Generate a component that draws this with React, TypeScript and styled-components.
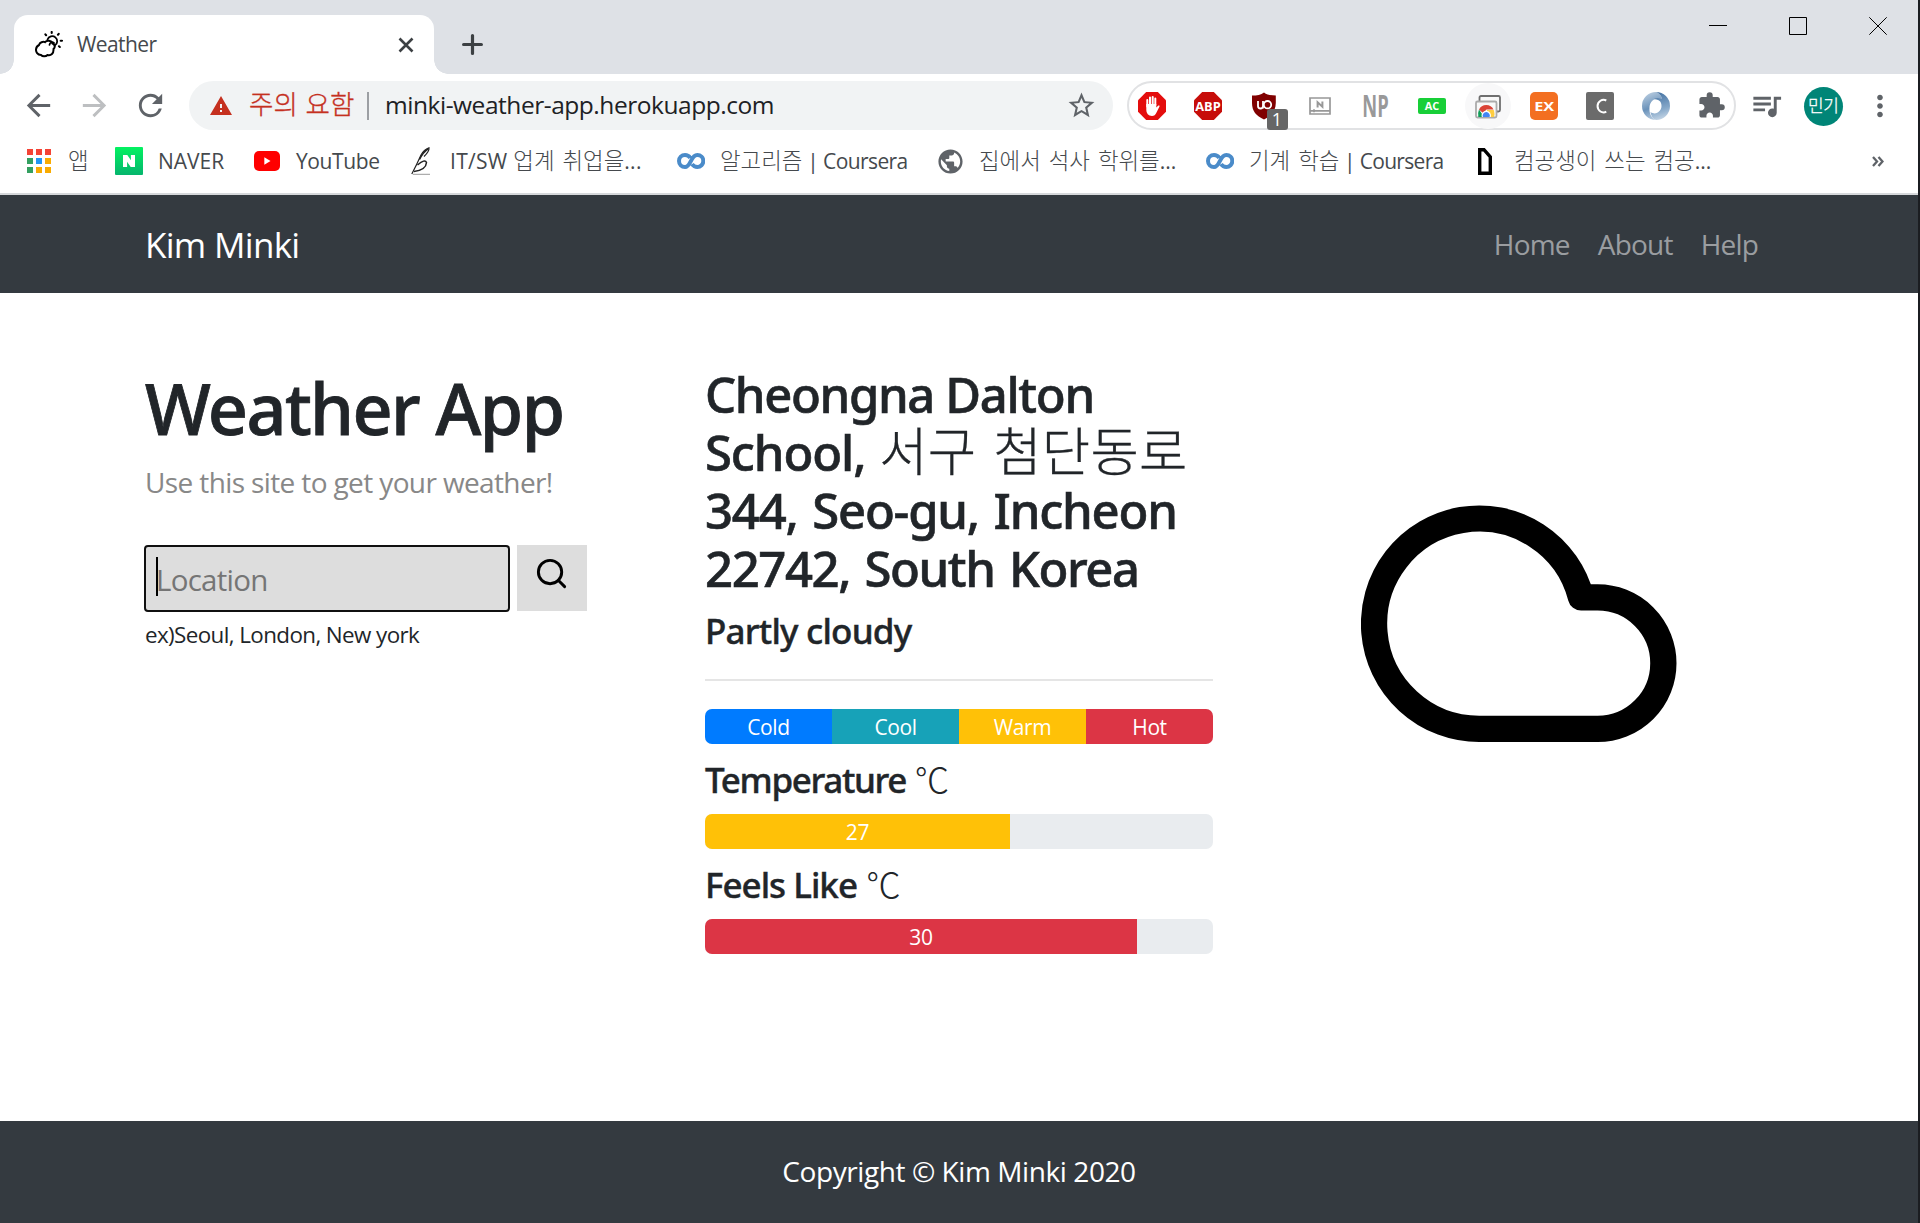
import React from "react";
import styled, { createGlobalStyle, css } from "styled-components";
import {
  MdArrowBack,
  MdArrowForward,
  MdExtension,
  MdMoreVert,
  MdPublic,
  MdQueueMusic,
  MdRefresh,
  MdStarBorder,
  MdWarning,
} from "react-icons/md";

const latin = '"Open Sans", "Noto Sans", "Noto Sans CJK KR", sans-serif';
const medium = '"Noto Sans", "Open Sans", "Noto Sans CJK KR", sans-serif';
const korean = '"Noto Sans CJK KR", sans-serif';

const GlobalStyle = createGlobalStyle`
  *, *::before, *::after { box-sizing: border-box; }
  body { margin: 0; background: #fff; }
  svg { display: block; flex: none; }
  h1, h2, h3, p { margin: 0; }
`;

/* ---------- window ---------- */

const Window = styled.div`
  display: flex;
  flex-direction: column;
  width: 1920px;
  height: 1223px;
  overflow: hidden;
  border-right: 2px solid #1b1d21;
  background: #fff;
  font-family: ${latin};
  color: #212529;
`;

const TabStrip = styled.div`
  display: flex;
  flex: none;
  height: 74px;
  padding: 15px 0 0 14px;
  background: #dee1e6;
`;

const Tab = styled.div`
  position: relative;
  display: flex;
  align-items: center;
  width: 420px;
  height: 59px;
  padding: 0 20px 0 21px;
  border-radius: 14px 14px 0 0;
  background: #fff;

  &::before,
  &::after {
    content: "";
    position: absolute;
    bottom: 0;
    width: 14px;
    height: 14px;
  }
  &::before {
    left: -14px;
    background: radial-gradient(circle at 0 0, transparent 13.5px, #fff 14px);
  }
  &::after {
    right: -14px;
    background: radial-gradient(circle at 100% 0, transparent 13.5px, #fff 14px);
  }
`;

const TabTitle = styled.span`
  flex: 1;
  margin: -1px 0 0 14px;
  font-size: 21px;
  letter-spacing: -0.6px;
  color: #45494d;
`;

const NewTab = styled.div`
  display: flex;
  align-items: center;
  height: 59px;
  margin-left: 28px;
`;

const WindowControls = styled.div`
  display: flex;
  gap: 62px;
  margin: 2px 31.5px 0 auto;
`;

/* ---------- toolbar ---------- */

const Toolbar = styled.div`
  display: flex;
  flex: none;
  align-items: center;
  height: 63px;
  padding: 0 21.5px 0 21px;
`;

const NavButtons = styled.div`
  display: flex;
  gap: 21px;
  color: #5f6368;
`;

const Omnibox = styled.div`
  display: flex;
  align-items: center;
  width: 924px;
  height: 49px;
  margin-left: 21px;
  padding: 0 16px 0 20px;
  border-radius: 25px;
  background: #f1f3f4;
`;

const Warning = styled.span`
  width: 104px;
  margin: -5px 14px 0 16px;
  font: 300 26.5px/40px ${korean};
  word-spacing: 2px;
  white-space: nowrap;
  color: #c5301f;
  -webkit-text-stroke: 0.35px #c5301f;
`;

const OmniDivider = styled.span`
  width: 2px;
  height: 28px;
  margin-right: 16px;
  background: #9c9fa3;
`;

const Address = styled.span`
  flex: 1;
  margin-top: -2px;
  font-size: 24.5px;
  letter-spacing: -0.46px;
  color: #202124;
`;

const Extensions = styled.div`
  display: flex;
  align-items: center;
  gap: 28px;
  height: 49px;
  margin-left: 14px;
  padding: 0 8.5px;
  border: 2px solid #e1e2e4;
  border-radius: 25px;
`;

const ExtensionSlot = styled.div<{ $halo?: boolean }>`
  position: relative;
  display: flex;
  align-items: center;
  justify-content: center;
  width: 28px;
  height: 28px;
  border-radius: 50%;
  color: #5f6368;
  ${(p) => p.$halo && css`
    background: #f8f8f9;
    box-shadow: 0 0 0 9px #f8f8f9;
  `}
`;

const Badge = styled.span`
  position: absolute;
  left: 17px;
  top: 17px;
  width: 21px;
  height: 21px;
  border-radius: 3px;
  background: #666;
  color: #fff;
  font-size: 18px;
  line-height: 20px;
  text-align: center;
`;

const ToolbarEnd = styled.div`
  display: flex;
  align-items: center;
  flex: 1;
  justify-content: space-between;
  margin-left: 13px;
  color: #5f6368;
`;

const Avatar = styled.div`
  width: 39px;
  height: 39px;
  margin-top: 1px;
  border-radius: 50%;
  background: #008577;
  color: #fff;
  font: 300 17px/36px ${korean};
  letter-spacing: -0.5px;
  text-align: center;
  -webkit-text-stroke: 0.3px #fff;
`;

/* ---------- bookmarks ---------- */

const Bookmarks = styled.div`
  display: flex;
  flex: none;
  align-items: center;
  height: 58px;
  padding: 0 34px 8px 25px;
  border-bottom: 2px solid #d6d8db;
`;

const Bookmark = styled.div<{ $width: number }>`
  display: flex;
  align-items: center;
  gap: 15px;
  width: ${(p) => p.$width}px;
`;

const BookmarkIcon = styled.span`
  display: flex;
  justify-content: center;
  width: 28px;
`;

const BookmarkLabel = styled.span<{ $tracking?: number }>`
  font-size: 21px;
  line-height: 30px;
  letter-spacing: ${(p) => p.$tracking ?? 0}px;
  white-space: pre;
  color: #45494d;
`;

const Hangul = styled.span`
  font: 300 22.4px/0 ${korean};
  letter-spacing: 0;
  word-spacing: 3px;
`;

const More = styled.div`
  margin-left: auto;
`;

/* ---------- site ---------- */

const Navbar = styled.header`
  display: flex;
  flex: none;
  align-items: center;
  justify-content: space-between;
  height: 98px;
  padding: 0 160px 0 145px;
  background: #343a40;
`;

const Brand = styled.a`
  font-size: 35px;
  letter-spacing: -0.7px;
  color: #fff;
`;

const NavLinks = styled.nav`
  display: flex;
  gap: 28px;
`;

const NavLink = styled.a`
  font-size: 28px;
  letter-spacing: -0.8px;
  color: #9a9da0;
`;

const Main = styled.main`
  display: grid;
  grid-template-columns: 560px 656px 1fr;
  flex: 1;
  padding: 71px 0 0 145px;
`;

const Column = styled.section``;

const Title = styled.h1`
  margin-top: 2px;
  font: 500 70px/84px ${medium};
  letter-spacing: -1.6px;
  -webkit-text-stroke: 0.8px #212529;
`;

const Lead = styled.p`
  margin-top: 11px;
  font-size: 28px;
  line-height: 42px;
  letter-spacing: -0.62px;
  color: #888;
`;

const SearchForm = styled.div`
  display: flex;
  gap: 7px;
  margin: 42px 0 0 -1px;
`;

const LocationField = styled.div`
  display: flex;
  align-items: center;
  width: 366px;
  height: 67px;
  padding: 2px 0 0 10px;
  border: 2px solid #101010;
  border-radius: 4px;
  background: #ddd;
`;

const Caret = styled.span`
  width: 2px;
  height: 39px;
  margin: -6px -2px 0 0;
  background: #000;
`;

const Placeholder = styled.span`
  font-size: 29.5px;
  letter-spacing: -0.75px;
  color: #757575;
`;

const SearchButton = styled.div`
  display: flex;
  justify-content: center;
  width: 70px;
  height: 66px;
  padding: 11px 2px 0 0;
  background: #ddd;
`;

const Hint = styled.p`
  margin-top: 6px;
  font-size: 22.4px;
  line-height: 34px;
  letter-spacing: -0.6px;
`;

const Place = styled.h2`
  margin-top: 1px;
  font: 500 49px/58px ${medium};
  white-space: nowrap;
  -webkit-text-stroke: 0.6px #212529;
`;

const PlaceLine = styled.span<{ $tracking: number; $word?: number }>`
  display: block;
  height: 58px;
  letter-spacing: ${(p) => p.$tracking}px;
  word-spacing: ${(p) => p.$word ?? 0}px;
`;

const PlaceHangul = styled.span`
  margin-left: 2px;
  font: 300 52.5px/0 ${korean};
  letter-spacing: 0.3px;
  word-spacing: 5px;
  -webkit-text-stroke: 0.3px #212529;
`;

const Condition = styled.h3<{ $tracking?: number }>`
  height: 42px;
  font: 500 35px/44px ${medium};
  letter-spacing: ${(p) => p.$tracking ?? -0.8}px;
  -webkit-text-stroke: 0.4px #212529;
`;

const Degree = styled.span`
  margin-left: 1px;
  font: 300 34.5px/0 ${korean};
  -webkit-text-stroke: 0;
`;

const Forecast = styled(Column)`
  width: 508px;

  ${Place} + ${Condition} {
    margin-top: 12px;
  }
`;

const Rule = styled.hr`
  height: 2px;
  margin: 28px 0;
  border: 0;
  background: #e5e5e5;
`;

const Progress = styled.div`
  display: flex;
  height: 35px;
  overflow: hidden;
  border-radius: 7px;
  background: #e9ecef;

  & + ${Condition} {
    margin-top: 14px;
  }
  ${Condition} + & {
    margin-top: 14px;
  }
`;

const Bar = styled.div<{ $share: number; $color: string }>`
  width: ${(p) => p.$share}%;
  background: ${(p) => p.$color};
  color: #fff;
  font-size: 21px;
  line-height: 37px;
  letter-spacing: -0.4px;
  text-align: center;
`;

const CloudPanel = styled(Column)`
  padding-top: 102px;
`;

const Footer = styled.footer`
  display: flex;
  flex: none;
  align-items: center;
  justify-content: center;
  height: 102px;
  padding-bottom: 3px;
  background: #343a40;
  color: #fff;
  font-size: 28px;
  letter-spacing: -0.42px;
`;

/* ---------- drawings ---------- */

const octagon = "M8.2 0H19.8L28 8.2V19.8L19.8 28H8.2L0 19.8V8.2Z";

const WeatherIcon = () => (
  <svg width="28" height="28" viewBox="0 0 28 28" fill="none" stroke="#000" strokeWidth="1.8" strokeLinecap="round">
    <path d="M6 24C2.5 24 .8 21 1 18.300C1.300 15.500 3 14.500 4 14C4.800 11.400 8 10.300 10 11.200C12 8.800 16.500 9.300 17.500 12.500C20.300 13.500 20.300 16.500 18.500 18C18.800 22.500 16 25 12.500 24C10.500 26 7.500 25.500 6 24Z" strokeWidth="2" />
    <path d="M12.500 8.500A5 5 0 1 1 19.800 14.500M14.500 13.800C14.800 11.500 17 10.500 19 12" />
    <path d="M16.700 1V2M10.400 3.400L11.100 4.200M23.700 2.900L23 3.700M25.700 9.700H27M24 15.300L24.800 16" strokeWidth="2.100" />
  </svg>
);

const AdBlockIcon = () => (
  <svg width="28" height="28" viewBox="0 0 28 28">
    <path d={octagon} fill="#e40d0d" />
    <path d="M9.300 14.500V8M12 12V5.500M14.700 12V5M17.300 13V6.500" stroke="#fff" strokeWidth="2" strokeLinecap="round" />
    <path d="M8.300 12H18.300V15.500L20.300 13.600Q22 13 21.500 14.500L18.500 20.500Q17 24 14 24Q8.300 23.500 8.300 18Z" fill="#fff" />
  </svg>
);

const AbpIcon = () => (
  <svg width="28" height="28" viewBox="0 0 28 28">
    <path d={octagon} fill="#c70d0a" />
    <text x="14" y="18.700" textAnchor="middle" fontFamily="Open Sans" fontWeight="700" fontSize="12.800" fill="#fff">ABP</text>
  </svg>
);

const UblockIcon = () => (
  <svg width="28" height="28" viewBox="0 0 28 28">
    <path d="M14 .5C17 3 21 3.500 25.800 3.500V11C25.800 19 21 24 14 27.500C6 24 2 19 2 11V3.500C7 3.500 11 3 14 .5Z" fill="#800000" />
    <path d="M8 9V14Q8 16.500 10.500 16.500Q13 16.500 13 14V9M13 16.500V13" fill="none" stroke="#fff" strokeWidth="1.800" />
    <circle cx="17.500" cy="12.700" r="3.700" fill="none" stroke="#fff" strokeWidth="1.800" />
  </svg>
);

const MonitorIcon = () => (
  <svg width="22" height="18" viewBox="0 0 22 18" fill="none" stroke="#989898" strokeWidth="1.700">
    <path d="M1 1H21V17H1ZM1 13.800H21M5 12.300V15.300" />
    <path d="M8.600 10.500V5.300L13.400 9.700V4.500" strokeWidth="2" />
  </svg>
);

const NpIcon = () => (
  <svg width="28" height="28" viewBox="0 0 28 28" overflow="visible">
    <text transform="translate(.3 25) scale(.6 1)" fontFamily="Open Sans" fontWeight="700" fontSize="30.500" fill="#999">NP</text>
  </svg>
);

const AcIcon = () => (
  <svg width="28" height="28" viewBox="0 0 28 28">
    <rect y="6" width="28" height="16" rx="2" fill="#18cf38" />
    <text x="14" y="17.800" textAnchor="middle" textLength="14.500" lengthAdjust="spacingAndGlyphs" fontFamily="Open Sans" fontWeight="700" fontSize="10.500" fill="#fff">AC</text>
  </svg>
);

const RemoteIcon = () => (
  <svg width="28" height="28" viewBox="0 0 28 28">
    <rect x="5.500" y="4" width="20.500" height="15.500" rx="1.500" fill="#f8f8f8" stroke="#6f6f6f" strokeWidth="1.800" />
    <rect x="2" y="9.500" width="20.500" height="16" rx="1.500" fill="#f8f8f8" stroke="#ababab" strokeWidth="1.800" />
    <path d="M5 17.500A8 8 0 0 1 19.500 17.500H12.500L9 21Z" fill="#db4437" />
    <path d="M5 17.500L10 25H4.300Q3.600 21 5 17.500Z" fill="#0f9d58" />
    <path d="M13 18H19.800Q21 21.500 20 25H14Z" fill="#ffcd40" />
    <path d="M7.800 25A4.700 4.700 0 1 1 16.700 25Z" fill="#fff" />
    <path d="M8.900 25A3.600 3.600 0 1 1 15.600 25Z" fill="#4285f4" />
  </svg>
);

const ExIcon = () => (
  <svg width="28" height="28" viewBox="0 0 28 28">
    <rect width="28" height="28" rx="5" fill="#f36f21" />
    <text x="14.200" y="18.700" textAnchor="middle" textLength="20" lengthAdjust="spacingAndGlyphs" fontFamily="Open Sans" fontWeight="700" fontSize="13" fill="#fff">EX</text>
  </svg>
);

const CIcon = () => (
  <svg width="28" height="28" viewBox="0 0 28 28">
    <rect width="28" height="28" rx="2" fill="#6b6b6b" />
    <path d="M20.300 8.500A6 6.300 0 1 0 20.300 19.700" fill="none" stroke="#fff" strokeWidth="2" />
  </svg>
);

const SwirlIcon = () => (
  <svg width="28" height="28" viewBox="0 0 28 28">
    <defs>
      <linearGradient id="swirlA" x1="0.300" y1="0" x2="0.600" y2="1">
        <stop offset="0" stopColor="#b9cde0" />
        <stop offset="0.550" stopColor="#6a92ba" />
        <stop offset="1" stopColor="#bdd0e3" />
      </linearGradient>
      <linearGradient id="swirlB" x1="0.500" y1="0" x2="0.700" y2="1">
        <stop offset="0" stopColor="#4674a4" />
        <stop offset="0.600" stopColor="#86a8c9" />
        <stop offset="1" stopColor="#cbdae9" />
      </linearGradient>
    </defs>
    <path d="M14 0A14 14 0 0 0 14 28C9.500 26 7 22 7.500 15S14 5 20 7C19 3 17 1 14 0Z" fill="url(#swirlA)" />
    <path d="M14 0A14 14 0 0 1 14 28C11 27 9 24 8.500 20C14 24 19.500 19 19.500 14S17 8 12 7C14 5.500 17 5.500 20 7C19 3 17 1 14 0Z" fill="url(#swirlB)" />
    <path d="M14 7.500C10 9 9.500 18.500 13.500 20.500C18 19 18.500 10 14 7.500Z" fill="#fff" />
  </svg>
);

const AppsIcon = () => {
  const colors = ["#f44336", "#f44336", "#f44336", "#34a060", "#2196f3", "#f9ab00", "#34a060", "#f9ab00", "#f9ab00"];
  return (
    <svg width="24" height="24" viewBox="0 0 24 24">
      {colors.map((c, i) => (
        <rect key={i} x={(i % 3) * 9} y={Math.floor(i / 3) * 9} width="6" height="6" fill={c} />
      ))}
    </svg>
  );
};

const NaverIcon = () => (
  <svg width="28" height="28" viewBox="0 0 28 28">
    <defs>
      <linearGradient id="naver" x1="0" y1="0" x2="0" y2="1">
        <stop offset="0" stopColor="#03f261" />
        <stop offset="1" stopColor="#05b56d" />
      </linearGradient>
    </defs>
    <rect width="28" height="28" rx="1" fill="url(#naver)" />
    <path d="M8 8H12.300L15.900 13.300V8H20V20H15.700L12.100 14.700V20H8Z" fill="#fff" />
  </svg>
);

const YoutubeIcon = () => (
  <svg width="26" height="20" viewBox="0 0 26 20">
    <rect width="26" height="20" rx="5" fill="#f00" />
    <path d="M10.300 6.300L16.500 10L10.300 13.700Z" fill="#fff" />
  </svg>
);

const QuillIcon = () => (
  <svg width="20" height="28" viewBox="0 0 20 28" fill="none" stroke="#222">
    <path d="M.8 27Q6 17 10 8Q13 2.500 18 .8Q18.500 4 13 9.500" strokeWidth="1.200" />
    <path d="M8.500 12.500Q12 5 17.500 1.500" strokeWidth="1.500" />
    <path d="M6.500 18Q14 11.500 15.500 15.500Q15 23 3 24.500" strokeWidth="1.500" />
    <path d="M2 27.300H19" stroke="#999" strokeWidth="1" />
  </svg>
);

const CourseraIcon = () => (
  <svg width="28" height="16" viewBox="0 0 28 16" fill="none" stroke="#4a8bc9" strokeWidth="4">
    <path d="M13.300 4.800C12 2.900 10.300 2 8 2A6 6 0 1 0 8 14C14 14 13.500 2 20.300 2A6 6 0 1 1 20.300 14C18 14 16.300 13 15 11.200" />
  </svg>
);

const DIcon = () => (
  <svg width="14" height="27" viewBox="0 0 14 27" fill="none" stroke="#000" strokeWidth="3.400">
    <path d="M1.700 1.700H6L12.300 9V25.300H1.700Z" />
  </svg>
);

const hangulRun = /([\uac00-\ud7a3]+(?: [\uac00-\ud7a3]+)*)/;

/** Sets the Hangul runs of a label in their own face. */
const Mixed = ({ text }: { text: string }) => (
  <>
    {text.split(hangulRun).map((part, i) => (i % 2 ? <Hangul key={i}>{part}</Hangul> : part))}
  </>
);

const bookmarks: { label: string; width: number; tracking?: number; icon: React.ReactNode }[] = [
  { label: "앱", width: 90, icon: <AppsIcon /> },
  { label: "NAVER", width: 138, icon: <NaverIcon /> },
  { label: "YouTube", width: 154, tracking: -0.4, icon: <YoutubeIcon /> },
  { label: "IT/SW 업계 취업을...", width: 270, tracking: 0.3, icon: <QuillIcon /> },
  { label: "알고리즘 | Coursera", width: 259, tracking: -0.6, icon: <CourseraIcon /> },
  { label: "집에서 석사 학위를...", width: 270, icon: <MdPublic size={29} color="#5f6368" /> },
  { label: "기계 학습 | Coursera", width: 265, tracking: -0.7, icon: <CourseraIcon /> },
  { label: "컴공생이 쓰는 컴공...", width: 280, icon: <DIcon /> },
];

const extensions: { icon: React.ReactNode; halo?: boolean; badge?: string }[] = [
  { icon: <AdBlockIcon /> },
  { icon: <AbpIcon /> },
  { icon: <UblockIcon />, badge: "1" },
  { icon: <MonitorIcon /> },
  { icon: <NpIcon /> },
  { icon: <AcIcon /> },
  { icon: <RemoteIcon />, halo: true },
  { icon: <ExIcon /> },
  { icon: <CIcon /> },
  { icon: <SwirlIcon /> },
  { icon: <MdExtension size={29} /> },
];

const scale = [
  { label: "Cold", color: "#007bff" },
  { label: "Cool", color: "#17a2b8" },
  { label: "Warm", color: "#ffc107" },
  { label: "Hot", color: "#dc3545" },
];

export default function App() {
  return (
    <Window>
      <GlobalStyle />
      <TabStrip>
        <Tab>
          <WeatherIcon />
          <TabTitle>Weather</TabTitle>
          <svg width="16" height="16" viewBox="0 0 16 16" stroke="#3c4043" strokeWidth="2.600">
            <path d="M1.500 1.500L14.500 14.500M14.500 1.500L1.500 14.500" />
          </svg>
        </Tab>
        <NewTab>
          <svg width="21" height="21" viewBox="0 0 21 21" stroke="#3c4043" strokeWidth="3.200" strokeLinecap="round">
            <path d="M10.500 1.600V19.400M1.600 10.500H19.400" />
          </svg>
        </NewTab>
        <WindowControls>
          <svg width="18" height="18" viewBox="0 0 18 18" stroke="#000"><path d="M0 8.500H18" /></svg>
          <svg width="18" height="18" viewBox="0 0 18 18" stroke="#000" fill="none"><path d="M.5 .5H17.500V17.500H.5Z" /></svg>
          <svg width="18" height="18" viewBox="0 0 18 18" stroke="#000"><path d="M.3 .3L17.700 17.700M17.700 .3L.3 17.700" /></svg>
        </WindowControls>
      </TabStrip>

      <Toolbar>
        <NavButtons>
          <MdArrowBack size={35} />
          <MdArrowForward size={35} color="#bdbfc1" />
          <MdRefresh size={35} />
        </NavButtons>
        <Omnibox>
          <MdWarning size={24} color="#c5301f" />
          <Warning>주의 요함</Warning>
          <OmniDivider />
          <Address>minki-weather-app.herokuapp.com</Address>
          <MdStarBorder size={31} color="#5f6368" />
        </Omnibox>
        <Extensions>
          {extensions.map((e, i) => (
            <ExtensionSlot key={i} $halo={e.halo}>
              {e.icon}
              {e.badge && <Badge>{e.badge}</Badge>}
            </ExtensionSlot>
          ))}
        </Extensions>
        <ToolbarEnd>
          <MdQueueMusic size={35} />
          <Avatar>민기</Avatar>
          <MdMoreVert size={34} />
        </ToolbarEnd>
      </Toolbar>

      <Bookmarks>
        {bookmarks.map((b) => (
          <Bookmark key={b.label} $width={b.width}>
            <BookmarkIcon>{b.icon}</BookmarkIcon>
            <BookmarkLabel $tracking={b.tracking}>
              <Mixed text={b.label} />
            </BookmarkLabel>
          </Bookmark>
        ))}
        <More>
          <svg width="12" height="11" viewBox="0 0 12 11" fill="none" stroke="#5f6368" strokeWidth="2.300">
            <path d="M1 1L5 5.500L1 10M6.500 1L10.500 5.500L6.500 10" />
          </svg>
        </More>
      </Bookmarks>

      <Navbar>
        <Brand>Kim Minki</Brand>
        <NavLinks>
          <NavLink>Home</NavLink>
          <NavLink>About</NavLink>
          <NavLink>Help</NavLink>
        </NavLinks>
      </Navbar>

      <Main>
        <Column>
          <Title>Weather App</Title>
          <Lead>Use this site to get your weather!</Lead>
          <SearchForm>
            <LocationField>
              <Caret />
              <Placeholder>Location</Placeholder>
            </LocationField>
            <SearchButton>
              <svg width="35" height="35" viewBox="0 0 24 24" fill="none" stroke="#000" strokeWidth="2" strokeLinecap="round">
                <circle cx="11" cy="11" r="8" />
                <path d="M21 21L16.650 16.650" />
              </svg>
            </SearchButton>
          </SearchForm>
          <Hint>ex)Seoul, London, New york</Hint>
        </Column>

        <Forecast>
          <Place>
            <PlaceLine $tracking={-1.35}>Cheongna Dalton</PlaceLine>
            <PlaceLine $tracking={-1.1}>
              School, <PlaceHangul>서구 첨단동로</PlaceHangul>
            </PlaceLine>
            <PlaceLine $tracking={-1.2} $word={3}>344, Seo-gu, Incheon</PlaceLine>
            <PlaceLine $tracking={-1.4} $word={3}>22742, South Korea</PlaceLine>
          </Place>
          <Condition>Partly cloudy</Condition>
          <Rule />
          <Progress>
            {scale.map((s) => (
              <Bar key={s.label} $share={25} $color={s.color}>{s.label}</Bar>
            ))}
          </Progress>
          <Condition $tracking={-1.35}>Temperature <Degree>℃</Degree></Condition>
          <Progress>
            <Bar $share={60} $color="#ffc107">27</Bar>
          </Progress>
          <Condition $tracking={-1}>Feels Like <Degree>℃</Degree></Condition>
          <Progress>
            <Bar $share={85} $color="#dc3545">30</Bar>
          </Progress>
        </Forecast>

        <CloudPanel>
          <svg width="315.500" height="315.500" viewBox="0 0 24 24" fill="none" stroke="#000" strokeWidth="2" strokeLinejoin="round">
            <path d="M18 10h-1.260A8 8 0 1 0 9 20h9a5 5 0 0 0 0-10z" />
          </svg>
        </CloudPanel>
      </Main>

      <Footer>Copyright © Kim Minki 2020</Footer>
    </Window>
  );
}
